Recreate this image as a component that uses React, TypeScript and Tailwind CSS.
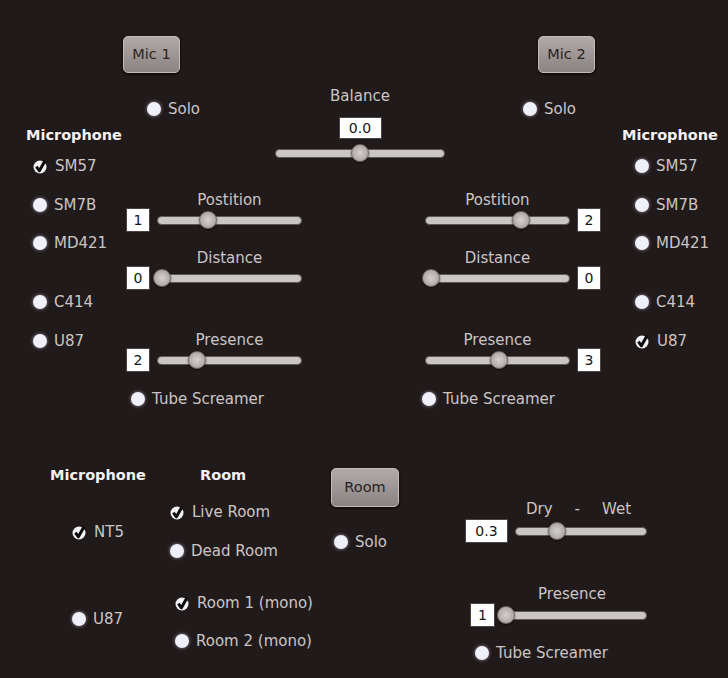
import React from "react";

function Radio({ checked }: { checked?: boolean }) {
  if (checked) {
    return (
      <svg width="15" height="15" viewBox="0 0 15 15" className="shrink-0">
        <circle cx="7" cy="8" r="6.5" fill="#f4f4f8" />
        <path d="M3.4 7.6 L6.4 11.8 L12 1.8" stroke="#0d0d0d" strokeWidth="3" fill="none" strokeLinejoin="round" />
      </svg>
    );
  }
  return (
    <span className="w-[14px] h-[14px] shrink-0 rounded-full bg-[#eff0fa] shadow-[0_0_3px_1px_rgba(210,210,235,0.35)]" />
  );
}

function Option({ label, checked, className = "" }: { label: string; checked?: boolean; className?: string }) {
  return (
    <div className={`flex items-center h-[20px] gap-[7px] whitespace-nowrap ${className}`}>
      <Radio checked={checked} />
      <span className="leading-[20px]">{label}</span>
    </div>
  );
}

function Heading({ children, className = "" }: { children: React.ReactNode; className?: string }) {
  return (
    <div className={`h-[18px] leading-[18px] font-bold text-[14.5px] text-[#f3f1f1] whitespace-nowrap ${className}`}>
      {children}
    </div>
  );
}

function Btn({ label, className = "" }: { label: string; className?: string }) {
  return (
    <div
      className={`flex items-center justify-center rounded-[5px] border border-[#c4bcbc] bg-linear-to-b from-[#b2aaaa] to-[#8b8282] text-[#2a2424] text-[14.5px] shadow-[0_1px_3px_rgba(0,0,0,0.9)] ${className}`}
    >
      {label}
    </div>
  );
}

function NumBox({ value, className = "" }: { value: string; className?: string }) {
  return (
    <div
      className={`flex items-center justify-center bg-white text-[#151515] text-[14px] border border-[#4a4343] shrink-0 ${className}`}
    >
      {value}
    </div>
  );
}

function Slider({ thumb, className = "" }: { thumb: number; className?: string }) {
  return (
    <div className={`relative h-[18px] flex items-center shrink-0 ${className}`}>
      <div className="h-[9px] w-full rounded-full bg-[#cbc6c6] border border-[#5e5757]" />
      <div
        className="absolute top-0 w-[18px] h-[18px] rounded-full border border-[#6f6868] bg-radial from-[#d6d1d1] to-[#9d9696] shadow-[0_1px_2px_rgba(0,0,0,0.6)]"
        style={{ left: thumb }}
      />
    </div>
  );
}

function SliderBlock({
  label,
  value,
  thumb,
  boxRight,
  className = "",
}: {
  label: string;
  value: string;
  thumb: number;
  boxRight?: boolean;
  className?: string;
}) {
  return (
    <div className={`flex flex-col ${className}`}>
      <div className={`h-[16px] leading-[16px] text-center ${boxRight ? "pr-[31px]" : "pl-[31px]"}`}>{label}</div>
      <div className="flex items-center h-[24px] gap-[7px]">
        {boxRight ? (
          <>
            <Slider thumb={thumb} className="w-[145px]" />
            <NumBox value={value} className="w-[24px] h-[24px]" />
          </>
        ) : (
          <>
            <NumBox value={value} className="w-[24px] h-[24px]" />
            <Slider thumb={thumb} className="w-[145px]" />
          </>
        )}
      </div>
    </div>
  );
}

function MicList({ selected, className = "", listClass = "" }: { selected: string; className?: string; listClass?: string }) {
  return (
    <div className={`flex flex-col pt-[126px] ${className}`}>
      <Heading>Microphone</Heading>
      <div className={`flex flex-col mt-[12px] ${listClass}`}>
        <Option label="SM57" checked={selected === "SM57"} />
        <Option label="SM7B" className="mt-[19px]" />
        <Option label="MD421" className="mt-[18px]" />
        <Option label="C414" className="mt-[39px]" />
        <Option label="U87" checked={selected === "U87"} className="mt-[19px]" />
      </div>
    </div>
  );
}

export default function App() {
  return (
    <div className="w-[728px] h-[678px] overflow-hidden bg-[#211a1a] font-['DejaVu_Sans',sans-serif] text-[15px] text-[#cbc5c5]">
      {/* top section */}
      <div className="flex h-[409px]">
        <MicList selected="SM57" className="w-[122px] pl-[26px]" listClass="pl-[7px]" />

        <div className="w-[488px] flex flex-col">
          {/* row 1 */}
          <div className="flex items-start h-[161px]">
            <div className="w-[100px] flex flex-col">
              <Btn label="Mic 1" className="mt-[36px] ml-[1px] w-[57px] h-[37px]" />
              <Option label="Solo" className="mt-[26px] ml-[25px]" />
            </div>
            <div className="ml-[53px] w-[170px] flex flex-col items-center">
              <div className="mt-[88px] h-[16px] leading-[16px]">Balance</div>
              <NumBox value="0.0" className="mt-[13px] w-[43px] h-[22px]" />
              <Slider thumb={76} className="mt-[5px] w-[170px]" />
            </div>
            <div className="ml-[78px] flex flex-col">
              <Btn label="Mic 2" className="mt-[36px] ml-[15px] w-[57px] h-[37px]" />
              <Option label="Solo" className="mt-[26px]" />
            </div>
          </div>

          {/* row 2 */}
          <div className="flex mt-[31px]">
            <div className="ml-[4px] flex flex-col">
              <SliderBlock label="Postition" value="1" thumb={42} />
              <SliderBlock label="Distance" value="0" thumb={-4} className="mt-[18px]" />
              <SliderBlock label="Presence" value="2" thumb={31} className="mt-[42px]" />
              <Option label="Tube Screamer" className="mt-[17px] ml-[5px]" />
            </div>
            <div className="ml-[123px] flex flex-col">
              <SliderBlock label="Postition" value="2" thumb={87} boxRight />
              <SliderBlock label="Distance" value="0" thumb={-3} boxRight className="mt-[18px]" />
              <SliderBlock label="Presence" value="3" thumb={65} boxRight className="mt-[42px]" />
              <Option label="Tube Screamer" className="mt-[17px] -ml-[3px]" />
            </div>
          </div>
        </div>

        <MicList selected="U87" className="w-[118px] pl-[12px]" listClass="pl-[13px]" />
      </div>

      {/* bottom section */}
      <div className="flex pt-[57px]">
        <div className="ml-[50px] w-[120px] flex flex-col">
          <Heading>Microphone</Heading>
          <Option label="NT5" checked className="mt-[38px] ml-[22px]" />
          <Option label="U87" className="mt-[67px] ml-[22px]" />
        </div>

        <div className="w-[161px] flex flex-col">
          <Heading className="ml-[30px]">Room</Heading>
          <Option label="Live Room" checked className="mt-[18px]" />
          <Option label="Dead Room" className="mt-[19px]" />
          <Option label="Room 1 (mono)" checked className="mt-[32px] ml-[5px]" />
          <Option label="Room 2 (mono)" className="mt-[18px] ml-[5px]" />
        </div>

        <div className="w-[134px] flex flex-col">
          <Btn label="Room" className="mt-[2px] w-[68px] h-[39px]" />
          <Option label="Solo" className="mt-[25px] ml-[3px]" />
        </div>

        <div className="flex flex-col">
          <div className="mt-[35px] h-[16px] leading-[16px] flex gap-[22px] pl-[61px]">
            <span>Dry</span>
            <span>-</span>
            <span>Wet</span>
          </div>
          <div className="mt-[2px] flex items-center h-[24px] gap-[7px]">
            <NumBox value="0.3" className="w-[43px] h-[24px]" />
            <Slider thumb={33} className="w-[132px]" />
          </div>
          <div className="mt-[43px] h-[16px] leading-[16px] pl-[32px] w-[182px] text-center">Presence</div>
          <div className="mt-[1px] flex items-center h-[24px] gap-[2px] ml-[5px]">
            <NumBox value="1" className="w-[25px] h-[24px]" />
            <Slider thumb={0} className="w-[150px]" />
          </div>
          <Option label="Tube Screamer" className="mt-[16px] ml-[10px]" />
        </div>
      </div>
    </div>
  );
}
